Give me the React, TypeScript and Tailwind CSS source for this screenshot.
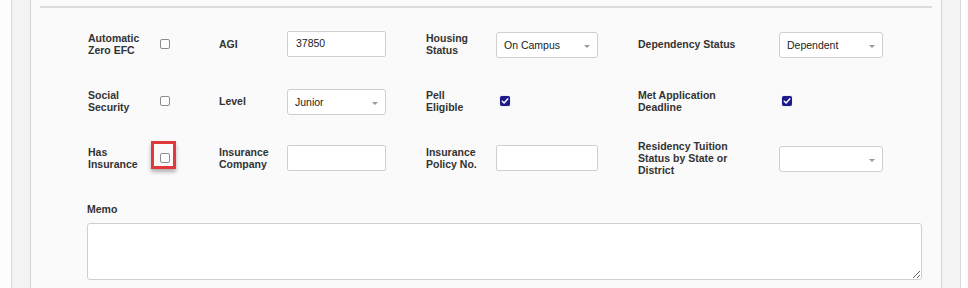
const FONT = "font-['Liberation_Sans',Arial,sans-serif]"

function Check({ checked = false, className = '' }: { checked?: boolean; className?: string }) {
  if (checked) {
    return (
      <span className={`flex h-[10px] w-[10px] items-center justify-center rounded-[2px] bg-[#1f1a8a] shadow-[0_0_1px_rgba(31,26,138,0.6)] ${className}`}>
        <svg width="8" height="8" viewBox="0 0 8 8">
          <path d="M1.3 4.2 L3.1 6 L6.7 1.9" fill="none" stroke="#fff" strokeWidth="1.5" strokeLinecap="round" strokeLinejoin="round" />
        </svg>
      </span>
    )
  }
  return <span className={`block h-[10px] w-[10px] rounded-[2px] border border-[#8c8c8c] bg-white ${className}`} />
}

function Label({ children }: { children: React.ReactNode }) {
  return <div className="text-[10.5px] font-bold leading-[12px] text-[#333]">{children}</div>
}

function TextBox({ value = '', width }: { value?: string; width: string }) {
  return (
    <div className={`flex h-[26px] ${width} items-center rounded-[2px] border border-[#cfcfcf] bg-white pl-[8px] text-[10.5px] text-[#222]`}>
      {value}
    </div>
  )
}

function Select({ value = '', width }: { value?: string; width: string }) {
  return (
    <div className={`mt-[2px] flex h-[26px] ${width} items-center justify-between rounded-[3px] border border-[#cfcfcf] bg-white pl-[7px] pr-[7px] text-[10.5px] text-[#222]`}>
      <span className="pt-[2px]">{value}</span>
      <span className="mt-[2px] h-0 w-0 border-x-[3px] border-t-[3px] border-x-transparent border-t-[#999]" />
    </div>
  )
}

export default function App() {
  return (
    <div className={`h-[288px] w-[968px] overflow-hidden bg-[#fdfdfd] pl-[11px] ${FONT}`}>
      <div className="flex h-full w-[950px] border-x border-[#d9d9d9] bg-[#f3f3f3] px-[18px]">
        <div className="h-full w-[912px] border-x border-[#d4d4d4] bg-[#fafafa]">
          <div className="mx-[9px] mt-[6px] h-[2px] bg-[#dcdcdc]" />

          <div className="grid grid-cols-[64px_67px_68px_139px_70px_142px_141px_104px] grid-rows-[26px_26px_26px] items-center gap-y-[31px] pl-[57px] pt-[23px]">
            <Label>Automatic<br />Zero EFC</Label>
            <Check className="ml-[8px]" />
            <Label>AGI</Label>
            <TextBox value="37850" width="w-[99px]" />
            <Label>Housing<br />Status</Label>
            <Select value="On Campus" width="w-[102px]" />
            <Label>Dependency Status</Label>
            <Select value="Dependent" width="w-[104px]" />

            <Label>Social<br />Security</Label>
            <Check className="ml-[8px]" />
            <Label>Level</Label>
            <Select value="Junior" width="w-[99px]" />
            <Label>Pell<br />Eligible</Label>
            <Check checked className="ml-[4px]" />
            <Label>Met Application<br />Deadline</Label>
            <Check checked className="ml-[3px]" />

            <Label>Has<br />Insurance</Label>
            <div className="relative ml-[8px] h-[10px] w-[10px]">
              <Check />
              <span className="absolute left-[-9px] top-[-12px] h-[28px] w-[25px] border-[3px] border-[#e0393c] shadow-[0_3px_4px_rgba(0,0,0,0.3)]" />
            </div>
            <Label>Insurance<br />Company</Label>
            <TextBox width="w-[99px]" />
            <Label>Insurance<br />Policy No.</Label>
            <TextBox width="w-[102px]" />
            <Label>Residency Tuition<br />Status by State or<br />District</Label>
            <Select width="w-[104px]" />
          </div>

          <div className="pl-[56px] pr-[18px] pt-[32px]">
            <Label>Memo</Label>
            <textarea
              readOnly
              className="mt-[8px] block h-[57px] w-[835px] rounded-[3px] border border-[#cfcfcf] bg-white"
            />
          </div>
        </div>
      </div>
    </div>
  )
}
